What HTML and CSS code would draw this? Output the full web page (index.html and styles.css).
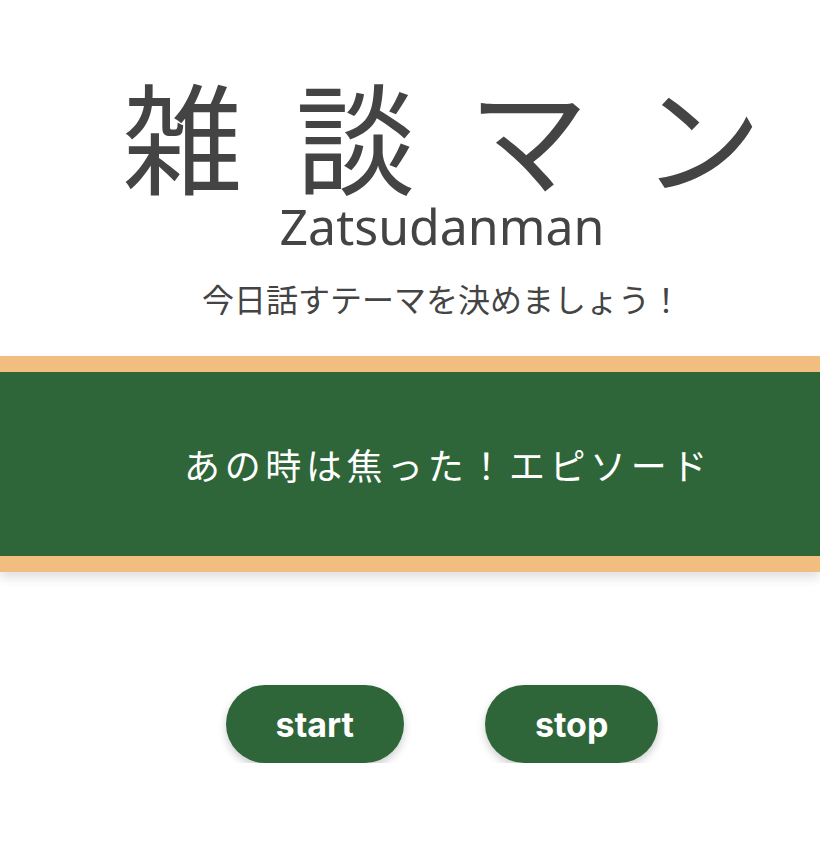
FILE: index.html
```html
<!DOCTYPE html>
<html>

<head>
  <meta charset="utf-8">
  <meta name="viewport" content="width=device-width">
  <title>雑談マン</title>
  <link rel="stylesheet" href="styles.css">
</head>

<body>
  <header class="head">
    <h1 class="title">
      <span>雑</span>
      <span>談</span>
      <span>マ</span>
      <span>ン</span>
    </h1>
    <p class="title-en">Zatsudanman</p>
    <p class="lead">今日話すテーマを決めましょう！</p>
  </header>
  <div class="board">
    <p class="theme">あの時は焦った！エピソード</p>
  </div>
  <div class="btns">
    <button class="btn">start</button>
    <button class="btn">stop</button>
  </div>
</body>

</html>
```

FILE: styles.css
```css
* {
  margin: 0;
  box-sizing: border-box;
}

body {
  --green: #2e663a;
  --wood: #f2be80;
  --pad-l: 64px;
  font-family: "Noto Sans CJK JP", "Noto Sans", sans-serif;
  color: #444;
  background: #fff;
}

/* タイトル */
.head {
  padding: 74px 0 0 var(--pad-l);
  text-align: center;
}

.title {
  display: flex;
  justify-content: center;
  gap: 53px;
  font-size: 120px;
  font-weight: 400;
  line-height: 120px;
}

.title-en {
  font-family: "Noto Sans", sans-serif;
  font-size: 50px;
  line-height: 56px;
  margin-top: 4px;
}

.lead {
  font-size: 32px;
  line-height: 40px;
  margin-top: 24px;
}

/* 黒板 */
.board {
  margin-top: 38px;
  background: var(--green);
  border-top: 16px solid var(--wood);
  border-bottom: 16px solid var(--wood);
  height: 216px;
  display: flex;
  align-items: center;
  justify-content: center;
  padding-left: var(--pad-l);
  box-shadow: 0 6px 10px rgba(0, 0, 0, .12);
}

.theme {
  color: #fff;
  font-size: 36px;
  letter-spacing: 4.6px;
  margin-left: 12px;
}

/* ボタン */
.btns {
  display: flex;
  justify-content: center;
  gap: 81px;
  padding: 113px 0 0 var(--pad-l);
}

.btn {
  height: 78px;
  padding: 0 50px;
  border: none;
  border-radius: 39px;
  background: var(--green);
  color: #fff;
  font-family: Inter, sans-serif;
  font-weight: 700;
  font-size: 34px;
  box-shadow: 0 4px 8px rgba(0, 0, 0, .2);
}
```
